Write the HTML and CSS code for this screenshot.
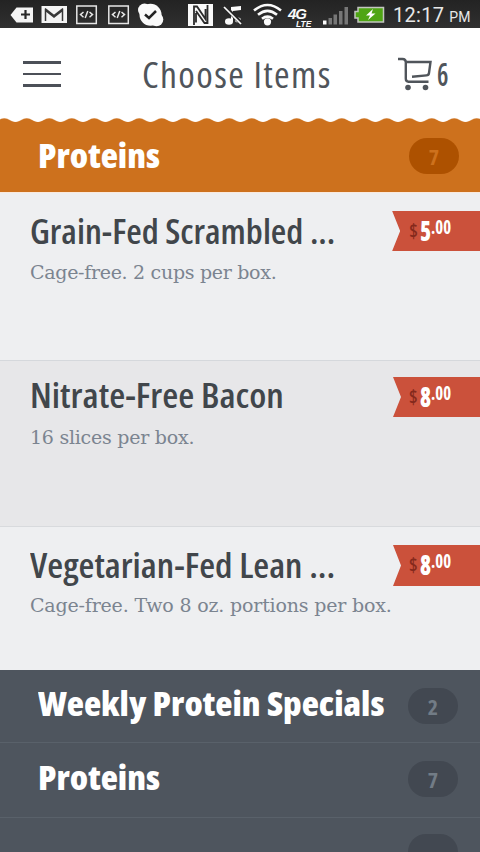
FILE: index.html
```
<!DOCTYPE html>
<html lang="en">
<head>
<meta charset="utf-8">
<meta name="viewport" content="width=device-width">
<title>Choose Items</title>
<link rel="stylesheet" href="styles.css">
</head>
<body>
<div class="screen">
  <div class="status">
    <svg class="status-icons" width="390" height="28" viewBox="0 0 390 28">
      <g fill="#f4f4f4">
        <path d="M10.5 15 L16.5 7.5 H33 V22.5 H16.5Z"/>
        <path d="M25.5 10 V19 M21 14.5 H30" stroke="#282828" stroke-width="2.2"/>
        <rect x="41.5" y="6" width="25.500" height="17"/>
        <path d="M45.500 21 V10.500 L54 17 L62.500 10.500 V21 M45 8.500 L54 15.500 L63 8.500" fill="none" stroke="#383838" stroke-width="1.5"/>
      </g>
      <g fill="none" stroke="#e6e6e6" stroke-width="1.5">
        <rect x="76.800" y="6" width="19.500" height="17.500"/>
        <path d="M83.500 12 L80.500 14.600 L83.500 17.200 M89.500 12 L92.500 14.600 L89.500 17.200 M87.800 11 L85.200 18"/>
        <rect x="108.800" y="6" width="19.500" height="17.500"/>
        <path d="M115.500 12 L112.500 14.600 L115.500 17.200 M121.500 12 L124.500 14.600 L121.500 17.200 M119.800 11 L117.200 18"/>
      </g>
      <g fill="#fafafa">
        <circle cx="150.500" cy="14.800" r="11"/><circle cx="144.500" cy="10" r="6.500"/><circle cx="156.500" cy="19.500" r="6.800"/>
        <path d="M145 14.500 L149 18 L156 11" fill="none" stroke="#222" stroke-width="2.500"/>
        <path d="M188 4 H213 V26 H188Z"/>
        <path d="M194 25 V6.500 H197 L205.500 19 V9 M196 13 V22.500 M207.500 5 V23 H204.500 L196 11" fill="none" stroke="#2b2b2b" stroke-width="1.800"/>
        <ellipse cx="229" cy="21.500" rx="4" ry="3.200"/><path d="M231 21 V7 L241 6 V10 L233 11 V21Z"/><ellipse cx="238" cy="20" rx="3" ry="2.500"/>
        <path d="M225 7 L241 23" stroke="#282828" stroke-width="4"/><path d="M224 7 L241 24" stroke="#fafafa" stroke-width="1.700"/>
        <circle cx="267.500" cy="21.800" r="3.600"/>
        <path d="M254 10.500 Q267.500 -.5 281 10.500 M258 14.800 Q267.500 7 277 14.800 M262 18.800 Q267.500 14.500 273 18.800" fill="none" stroke="#fafafa" stroke-width="2.600"/>
        <text class="net" x="288" y="19">4G</text><text class="lte" x="296" y="26.500">LTE</text>
        <path d="M323 20.500 h3.500 v4 h-3.500Z"/>
      </g>
      <path d="M328.500 18 h3.500 v6.500 h-3.500Z M333.500 14.500 h3.500 v10 h-3.500Z M339 11 h3.500 v13.500 h-3.500Z M344.500 7 h3.500 v17.500 h-3.500Z" fill="#777"/>
      <path d="M355 11.500 h3 V7.500 H383.500 V22 H358 V18 h-3Z" fill="#4fa514" stroke="#c3c6c0" stroke-width="1.500"/>
      <path d="M373 9 L366 15.500 H370 L368 20 L375.500 13.500 H371.500Z" fill="#fff"/>
    </svg>
    <div class="clock"><span>12:17</span><small>PM</small></div>
  </div>
  <header class="nav">
    <div class="menu"><i></i><i></i><i></i></div>
    <h1>Choose Items</h1>
    <div class="cart">
      <svg width="35" height="35" viewBox="0 0 35 35" fill="none" stroke="#50555b" stroke-width="2.400">
        <path d="M0 2 H4.500 Q7.800 2 7.800 5.300 V21.500 Q7.800 24.700 10.500 24.700 H30.500 M8 5 H32.500 L31 16 Q30.700 18.200 28.500 18.400 L14 19.700"/>
        <circle cx="10" cy="30.500" r="2.800" fill="#50555b" stroke="none"/><circle cx="27.500" cy="30.500" r="2.800" fill="#50555b" stroke="none"/>
      </svg>
      <span>6</span>
    </div>
  </header>
  <section class="group active">
    <svg class="wave" width="480" height="5">
      <defs><pattern id="scallop" width="22.500" height="5" x="-7" patternUnits="userSpaceOnUse"><path d="M0 0 H22.500 V4 C17.500 4 16 .3 11.250 .3 C6.500 .3 5 4 0 4Z" fill="#fff"/></pattern></defs>
      <rect width="480" height="5" fill="url(#scallop)"/>
    </svg>
    <h2>Proteins</h2><span class="count">7</span>
  </section>
  <main>
    <article class="item first">
      <div class="info"><h3>Grain-Fed Scrambled ...</h3><p>Cage-free. 2 cups per box.</p></div>
      <div class="price"><span class="cur">$</span><b>5</b><sup>.00</sup></div>
    </article>
    <article class="item second">
      <div class="info"><h3>Nitrate-Free Bacon</h3><p>16 slices per box.</p></div>
      <div class="price"><span class="cur">$</span><b>8</b><sup>.00</sup></div>
    </article>
    <article class="item third">
      <div class="info"><h3>Vegetarian-Fed Lean ...</h3><p>Cage-free. Two 8 oz. portions per box.</p></div>
      <div class="price"><span class="cur">$</span><b>8</b><sup>.00</sup></div>
    </article>
  </main>
  <section class="group specials"><h2>Weekly Protein Specials</h2><span class="count">2</span></section>
  <section class="group more"><h2>Proteins</h2><span class="count">7</span></section>
  <section class="group next"><span class="count"></span></section>
</div>
</body>
</html>
```
FILE: styles.css
```
* { box-sizing: border-box; margin: 0; padding: 0; }
body { font-family: "Open Sans", sans-serif; background: #4e555e; }
.screen { width: 480px; height: 852px; overflow: hidden; display: flex; flex-direction: column; }
.screen > * { flex: none; }

.status { height: 28px; display: flex; background: linear-gradient(#232323, #303030); }
.status-icons { display: block; }
.net { font: italic 700 15px "Liberation Sans", sans-serif; letter-spacing: -1px; }
.lte { font: italic 700 8.5px "Liberation Sans", sans-serif; }
.clock { display: flex; gap: 5px; padding-left: 3px; font: 400 20px/31px Roboto, sans-serif; letter-spacing: .3px; color: #e8e8e8; white-space: nowrap; }
.clock small { font-size: 14px; line-height: 34px; letter-spacing: 0; }

.nav { height: 90px; background: #fff; display: flex; align-items: flex-start; color: #50555b; }
.menu { width: 38px; margin: 33px 0 0 23px; display: flex; flex-direction: column; gap: 9px; }
.menu i { height: 2.5px; background: #4c5058; }
.nav h1 { margin: 22px 0 0 81px; width: 256px; font-size: 36px; line-height: 50px; font-weight: 400; font-stretch: 75%; letter-spacing: 1.3px; white-space: nowrap; transform: scaleX(1.045); transform-origin: 0 0; }
.cart { display: flex; padding-top: 29px; }
.cart svg { display: block; overflow: visible; }
.cart span { margin-left: 4px; font-size: 32px; line-height: 33px; font-weight: 600; display: block; transform: scaleX(.8); transform-origin: 0 0; font-stretch: 75%; }

.group { display: flex; align-items: flex-start; padding-left: 38px; position: relative; background: #4e555e; color: #fff; }
.group h2 { width: 370px; font-size: 34px; line-height: 40px; font-weight: 800; font-stretch: 75%; white-space: nowrap; transform: scaleX(1.045); transform-origin: 0 0; }
.count { width: 50px; height: 36px; border-radius: 18px; background: #424851; color: #727c86; text-align: center; font-size: 22px; line-height: 36px; font-weight: 700; font-stretch: 75%; }
.active { height: 74px; background: #cd711d; padding-top: 17px; }
.active .count { margin: 3px 0 0 1px; background: #ad5100; color: #cd711d; }
.wave { position: absolute; left: 0; top: 0; }

.item { display: flex; justify-content: space-between; align-items: flex-start; background: #eeeff1; padding-left: 30px; }
.info { white-space: nowrap; width: 363px; }
.item h3 { font-size: 34px; line-height: 40px; font-weight: 600; font-stretch: 75%; color: #41464b; transform: scaleX(1.046); transform-origin: 0 0; }
.item p { margin-top: 8px; font: 400 19px/26px "DejaVu Serif", serif; letter-spacing: -.3px; color: #7b8490; }
.first { height: 169px; padding-top: 18px; border-top: 1px solid #fae9dc; border-bottom: 1px solid #d5d8dc; }
.second { height: 166px; padding-top: 14px; background: #e7e7e9; border-bottom: 1px solid #d8dadd; }
.second h3 { transform: scaleX(1.083); }
.second p { margin-top: 9px; letter-spacing: -.25px; }
.third { height: 143px; padding-top: 18px; }
.third h3 { transform: scaleX(1.073); }
.third p { margin-top: 7px; letter-spacing: -.18px; }
.price { width: 87px; height: 41px; background: #cb513b; clip-path: polygon(0 0, 100% 0, 100% 100%, 0 100%, 8px 50%); display: flex; padding-left: 16px; color: #fff; font-stretch: 75%; font-weight: 700; }
.first .price { width: 88px; height: 40px; padding-left: 17px; }
.price .cur { width: 11px; font-size: 19px; line-height: 41px; color: #84291c; font-weight: 600; }
.price b { width: 11px; font-size: 28px; line-height: 39px; transform: scaleX(.8); transform-origin: 0 0; }
.price sup { font-size: 20px; line-height: 32px; transform: scaleX(.84); transform-origin: 0 0; }
.second .price { margin-top: 2px; height: 40px; }

.specials { height: 73px; padding-top: 13px; border-bottom: 1px solid #59616a; }
.specials .count { margin-top: 5px; }
.more { height: 75px; padding-top: 14px; border-bottom: 1px solid #59616a; }
.more .count { margin-top: 4px; }
.next { height: 60px; padding: 16px 0 0 408px; }
```
